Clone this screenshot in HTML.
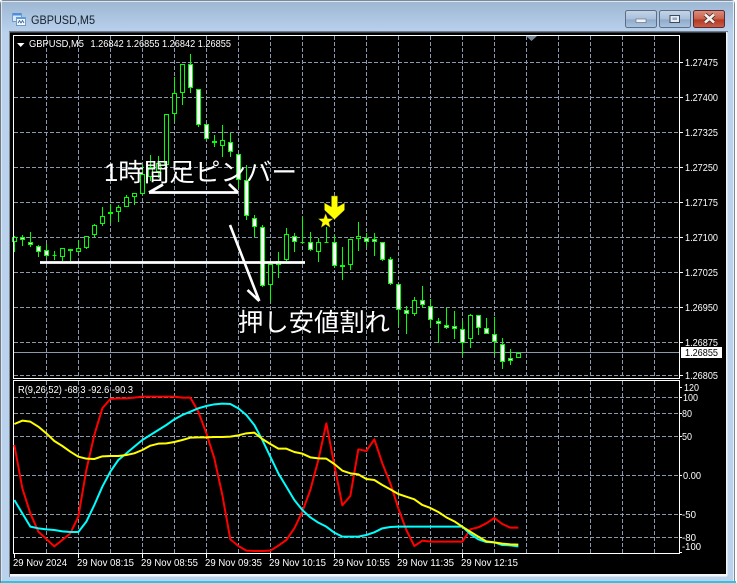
<!DOCTYPE html>
<html lang="ja">
<head>
<meta charset="utf-8">
<title>GBPUSD,M5</title>
<style>
html,body{margin:0;padding:0;background:#fff;width:737px;height:583px;overflow:hidden}
svg{display:block}
text{font-family:"Liberation Sans","Noto Sans CJK JP",sans-serif}
</style>
</head>
<body>
<svg width="737" height="583" viewBox="0 0 737 583" xmlns="http://www.w3.org/2000/svg">
<defs>
<linearGradient id="tb" x1="0" y1="0" x2="0" y2="1"><stop offset="0" stop-color="#9db6d2"/><stop offset="1" stop-color="#b9d1ec"/></linearGradient>
<linearGradient id="btn" x1="0" y1="0" x2="0" y2="1"><stop offset="0" stop-color="#c3d4e8"/><stop offset=".5" stop-color="#a9c0da"/><stop offset=".55" stop-color="#8fabc9"/><stop offset="1" stop-color="#a8c4e0"/></linearGradient>
<linearGradient id="cls" x1="0" y1="0" x2="0" y2="1"><stop offset="0" stop-color="#dc8f80"/><stop offset=".5" stop-color="#c9604a"/><stop offset=".55" stop-color="#b23a22"/><stop offset="1" stop-color="#c9604a"/></linearGradient>
</defs>

<!-- window frame -->
<path d="M4 0.5H731Q735 0.5 735 4.5V583H0V4.5Q0 0.5 4 0.5Z" fill="#bad2ec"/>
<path d="M4 .5H731Q734.5 .5 734.5 4.5V583" fill="none" stroke="#7d8b98" stroke-width="1"/>
<path d="M.5 583V4.5Q.5 .5 4 .5" fill="none" stroke="#6f7c88" stroke-width="1"/>
<rect x="1" y="1" width="733" height="31" fill="url(#tb)"/>
<rect x="1" y="1" width="733" height="1" fill="#dfe8f2"/>
<rect x="733" y="2" width="1" height="581" fill="#e6eef7"/>
<rect x="1" y="2" width="1" height="581" fill="#dbe6f2"/>
<rect x="1" y="581" width="735" height="2" fill="#2cc4de"/>
<rect x="9" y="31" width="719" height="1.5" fill="#6d7a88"/>
<rect x="9" y="32" width="1" height="545" fill="#7b8794"/>
<rect x="10" y="574" width="717" height="2.5" fill="#f2f6fb"/>
<rect x="726" y="32" width="1.5" height="544" fill="#f2f6fb"/>

<!-- title icon -->
<rect x="12.5" y="13.5" width="9" height="8" fill="#dbe9f8" stroke="#6c9bd0"/>
<rect x="13" y="13" width="8" height="2.5" fill="#4f8fd6"/>
<rect x="16.5" y="17.5" width="9" height="8" fill="#f4f8fd" stroke="#6c9bd0"/>
<rect x="17" y="17" width="8" height="2" fill="#5f9cdd"/>
<path d="M18 23l1.5-2.5 1.5 2.5 1.5-2.5 1.5 2.5" fill="none" stroke="#3a5a80" stroke-width=".8"/>
<text x="31" y="24" font-size="12" fill="#15202c" textLength="64" lengthAdjust="spacingAndGlyphs">GBPUSD,M5</text>

<!-- window buttons -->
<rect x="625.5" y="10.5" width="31" height="17" rx="2" fill="url(#btn)" stroke="#5c6d84"/>
<rect x="636" y="19" width="10" height="3.5" fill="#f2f4f7" stroke="#5a6675" stroke-width=".6"/>
<rect x="659.5" y="10.5" width="31" height="17" rx="2" fill="url(#btn)" stroke="#5c6d84"/>
<rect x="670" y="15.5" width="9.5" height="7" fill="#e8edf3" stroke="#3e4a58" stroke-width="1"/>
<rect x="672.5" y="17.5" width="4.5" height="2.5" fill="#8fa9c5"/>
<rect x="693.5" y="10.5" width="31" height="17" rx="2" fill="url(#cls)" stroke="#5b2a30"/>
<path d="M705 14.5L714 22.5M714 14.5L705 22.5" stroke="#4c2a26" stroke-width="4.2"/>
<path d="M705 14.5L714 22.5M714 14.5L705 22.5" stroke="#f4f1ef" stroke-width="2.6"/>

<!-- chart background -->
<rect x="10" y="32.5" width="716" height="541.5" fill="#000"/>

<!-- grid -->
<g stroke="#8a9aaa" stroke-width="1" stroke-dasharray="4 2" fill="none">
<path d="M46.5 36V378M78.5 36V378M110.5 36V378M142.5 36V378M174.5 36V378M206.5 36V378M238.5 36V378M270.5 36V378M302.5 36V378M334.5 36V378M366.5 36V378M398.5 36V378M430.5 36V378M462.5 36V378M494.5 36V378M526.5 36V378M558.5 36V378M590.5 36V378M622.5 36V378M654.5 36V378"/>
<path d="M14 62.5H679M14 97.5H679M14 132.5H679M14 167.5H679M14 202.5H679M14 237.5H679M14 272.5H679M14 307.5H679M14 342.5H679M14 375.5H679"/>
<path d="M46.5 381V553M78.5 381V553M110.5 381V553M142.5 381V553M174.5 381V553M206.5 381V553M238.5 381V553M270.5 381V553M302.5 381V553M334.5 381V553M366.5 381V553M398.5 381V553M430.5 381V553M462.5 381V553M494.5 381V553M526.5 381V553M558.5 381V553M590.5 381V553M622.5 381V553M654.5 381V553"/>
<path d="M14 397.5H679M14 413.5H679M14 436.5H679M14 475.5H679M14 514.5H679M14 537.5H679"/>
</g>

<!-- current price line -->
<path d="M14 352.5H680" stroke="#8a9aaa" stroke-width="1"/>

<!-- wicks -->
<path fill="none" stroke="#00ff00" stroke-width="1" d="M14.5 236V252M22.5 235V246M30.5 232V247M38.5 245V257M46.5 244V258M54.5 251V260M62.5 248V261M70.5 249V261M78.5 240V253M86.5 236V249M94.5 224V237M102.5 207V226M110.5 204V223M118.5 205V222M126.5 195V207M134.5 193V205M142.5 165V195M150.5 155V181M158.5 156V178M166.5 114V168M174.5 77V121M182.5 64V105M190.5 54V93M198.5 89V127M206.5 124V139M214.5 135V147M222.5 125V157M230.5 133V157M238.5 154V188M246.5 165V220M254.5 215V237M262.5 225V287M270.5 264V302M278.5 252V278M286.5 228V261M294.5 233V252M302.5 217V243M310.5 232V251M318.5 238V262M326.5 227V243M334.5 235V268M342.5 247V280M350.5 239V270M358.5 222V251M366.5 233V247M374.5 233V256M382.5 242V261M390.5 257V285M398.5 284V326M406.5 306V334M414.5 297V316M422.5 286V308M430.5 299V327M438.5 318V343M446.5 308V329M454.5 311V339M462.5 321V356M470.5 314V348M478.5 315V335M486.5 318V334M494.5 317V355M502.5 338V369M510.5 349V365M518.5 353V358"/>

<!-- hollow bodies -->
<path fill="#000" stroke="#00ff00" stroke-width="1" d="M12.5 237.5h4V241.5h-4zM60.5 248.5h4V256.5h-4zM76.5 248.5h4V251.5h-4zM84.5 236.5h4V247.5h-4zM92.5 225.5h4V234.5h-4zM100.5 216.5h4V223.5h-4zM108.5 212.5h4V213.5h-4zM116.5 207.5h4V211.5h-4zM124.5 197.5h4V206.5h-4zM132.5 193.5h4V196.5h-4zM140.5 174.5h4V193.5h-4zM148.5 167.5h4V176.5h-4zM156.5 163.5h4V171.5h-4zM164.5 114.5h4V164.5h-4zM172.5 93.5h4V113.5h-4zM180.5 64.5h4V92.5h-4zM220.5 140.5h4V145.5h-4zM268.5 264.5h4V284.5h-4zM276.5 261.5h4V264.5h-4zM284.5 234.5h4V259.5h-4zM316.5 242.5h4V251.5h-4zM348.5 239.5h4V264.5h-4zM356.5 236.5h4V238.5h-4zM412.5 300.5h4V313.5h-4zM468.5 315.5h4V338.5h-4zM516.5 353.5h4V357.5h-4z"/>

<!-- filled bodies -->
<path fill="#fff" stroke="#00ff00" stroke-width="1" d="M20.5 237.5h4V239.5h-4zM28.5 242.5h4V244.5h-4zM36.5 246.5h4V251.5h-4zM44.5 250.5h4V255.5h-4zM52.5 255.5h4V255.5h-4zM68.5 249.5h4V250.5h-4zM188.5 64.5h4V87.5h-4zM196.5 89.5h4V124.5h-4zM204.5 124.5h4V138.5h-4zM212.5 141.5h4V142.5h-4zM228.5 142.5h4V151.5h-4zM236.5 154.5h4V179.5h-4zM244.5 180.5h4V215.5h-4zM252.5 218.5h4V226.5h-4zM260.5 227.5h4V285.5h-4zM292.5 236.5h4V241.5h-4zM300.5 242.5h4V242.5h-4zM308.5 242.5h4V249.5h-4zM324.5 242.5h4V242.5h-4zM332.5 242.5h4V265.5h-4zM340.5 265.5h4V266.5h-4zM364.5 238.5h4V241.5h-4zM372.5 239.5h4V241.5h-4zM380.5 242.5h4V259.5h-4zM388.5 259.5h4V283.5h-4zM396.5 284.5h4V309.5h-4zM404.5 310.5h4V313.5h-4zM420.5 300.5h4V304.5h-4zM428.5 306.5h4V319.5h-4zM436.5 321.5h4V323.5h-4zM444.5 325.5h4V327.5h-4zM452.5 326.5h4V328.5h-4zM460.5 329.5h4V342.5h-4zM476.5 315.5h4V327.5h-4zM484.5 328.5h4V333.5h-4zM492.5 334.5h4V341.5h-4zM500.5 344.5h4V361.5h-4zM508.5 358.5h4V360.5h-4z"/>

<!-- panel frames -->
<path d="M13.5 378.5V35.5H679.5V378.5H13.5Z" fill="none" stroke="#fff" stroke-width="1"/>
<path d="M13.5 380.5H679.5V553.5H13.5Z" fill="none" stroke="#fff" stroke-width="1"/>
<path d="M526 36H537L531.5 41Z" fill="#778899"/>
<path d="M14.5 554V558M78.5 554V558M142.5 554V558M206.5 554V558M270.5 554V558M334.5 554V558M398.5 554V558M462.5 554V558" stroke="#fff" stroke-width="1"/>
<path d="M680 62.5h3M680 97.5h3M680 132.5h3M680 167.5h3M680 202.5h3M680 237.5h3M680 272.5h3M680 307.5h3M680 342.5h3M680 375.5h3M680 387.5h2M680 397.5h2M680 413.5h2M680 436.5h2M680 475.5h2M680 514.5h2M680 537.5h2M680 552.5h2" stroke="#fff" stroke-width="1"/>

<!-- price axis -->
<g fill="#fff" font-size="10.5">
<text x="685" y="66" textLength="33" lengthAdjust="spacingAndGlyphs">1.27475</text>
<text x="685" y="101" textLength="33" lengthAdjust="spacingAndGlyphs">1.27400</text>
<text x="685" y="136" textLength="33" lengthAdjust="spacingAndGlyphs">1.27325</text>
<text x="685" y="171" textLength="33" lengthAdjust="spacingAndGlyphs">1.27250</text>
<text x="685" y="206" textLength="33" lengthAdjust="spacingAndGlyphs">1.27175</text>
<text x="685" y="241" textLength="33" lengthAdjust="spacingAndGlyphs">1.27100</text>
<text x="685" y="276" textLength="33" lengthAdjust="spacingAndGlyphs">1.27025</text>
<text x="685" y="311" textLength="33" lengthAdjust="spacingAndGlyphs">1.26950</text>
<text x="685" y="346" textLength="33" lengthAdjust="spacingAndGlyphs">1.26875</text>
<text x="685" y="379" textLength="33" lengthAdjust="spacingAndGlyphs">1.26805</text>
</g>
<rect x="681" y="347" width="41" height="11" fill="#fff"/>
<text x="685" y="356" font-size="10.5" fill="#000" textLength="33" lengthAdjust="spacingAndGlyphs">1.26855</text>

<!-- header text -->
<path d="M17 43H24.5L20.7 47Z" fill="#fff"/>
<text x="29" y="47" font-size="10.5" fill="#fff" textLength="55" lengthAdjust="spacingAndGlyphs">GBPUSD,M5</text>
<text x="90.5" y="47" font-size="10.5" fill="#fff" textLength="140.5" lengthAdjust="spacingAndGlyphs">1.26842 1.26855 1.26842 1.26855</text>

<!-- drawn annotations -->
<g fill="none" stroke="#fff" stroke-width="2.8">
<path d="M40 262.5H305"/>
<path d="M149 192.5H238M149 192.5L163 184.5M238 192.5L229 184"/>
</g>
<path d="M230 225L259.3 301M247.5 290L259.3 301" fill="none" stroke="#fff" stroke-width="2.6"/>
<text x="104" y="181" font-size="25" font-weight="400" fill="#fff" textLength="193" lengthAdjust="spacingAndGlyphs">1時間足ピンバー</text>
<text x="238" y="331" font-size="25" font-weight="400" fill="#fff" textLength="152" lengthAdjust="spacingAndGlyphs">押し安値割れ</text>

<!-- yellow markers -->
<path d="M331.5 196H337.5V207L344.5 203V210L334.5 219.5L324.5 210V203L331.5 207Z" fill="#ffff00" stroke="#7f7f00" stroke-width=".5"/>
<path d="M325.7 213.5L327.6 218.6L333 218.8L328.8 222.2L330.2 227.4L325.7 224.4L321.2 227.4L322.6 222.2L318.4 218.8L323.8 218.6Z" fill="#ffff00" stroke="#7f7f00" stroke-width=".4"/>

<!-- indicator lines -->
<g transform="translate(0 380) scale(.33333)" fill="none" stroke-width="6" stroke-linejoin="round">
<polyline stroke="#ff0000" points="43,195 67,325 91,400 115,455 139,477 163,499 187,480 211,460 235,410 259,270 283,165 307,85 331,57 355,55 379,55 403,53 427,50 451,50 475,50 499,50 523,50 547,53 571,53 595,95 619,160 643,235 667,345 691,478 715,498 739,512 763,513 787,513 811,512 835,497 859,480 883,445 907,395 931,330 955,240 979,130 1003,255 1027,376 1051,348 1075,208 1099,213 1123,178 1147,250 1171,310 1195,385 1219,450 1243,498 1267,482 1291,485 1387,485 1411,448 1435,442 1459,430 1483,414 1507,432 1531,443 1555,443"/>
<polyline stroke="#00ffff" points="43,360 67,400 91,440 115,445 139,448 163,450 187,454 211,456 235,456 259,425 283,375 307,320 331,275 355,240 379,220 403,200 427,180 451,165 475,150 499,135 523,118 547,105 571,95 595,85 619,78 643,73 667,71 691,72 715,85 739,105 763,135 787,180 811,230 835,280 859,320 883,360 907,390 931,412 955,428 979,440 1003,458 1027,470 1051,470 1075,470 1099,465 1123,457 1147,445 1171,441 1195,440 1387,440 1411,462 1435,478 1459,486 1483,487 1507,495 1531,496 1555,499"/>
<polyline stroke="#ffff00" points="43,132 67,122 91,125 115,140 139,160 163,183 187,198 211,215 235,230 259,236 283,237 307,229 331,228 355,228 379,225 403,220 427,210 451,197 475,191 499,190 523,186 547,180 571,173 595,172 619,172 643,171 667,171 691,170 715,166 739,160 763,158 787,177 811,192 835,206 859,206 883,216 907,221 931,232 955,235 979,236 1003,252 1027,272 1051,280 1075,283 1099,297 1123,300 1147,315 1171,328 1195,342 1219,350 1243,358 1267,375 1291,384 1315,396 1339,412 1363,424 1387,440 1411,455 1435,470 1459,484 1483,487 1507,491 1531,493 1555,494"/>
</g>

<text x="18" y="393" font-size="10.5" fill="#fff" textLength="115" lengthAdjust="spacingAndGlyphs">R(9,26,52) -68.3 -92.6 -90.3</text>

<!-- indicator axis -->
<g fill="#fff" font-size="10.5">
<text x="684" y="391" textLength="15" lengthAdjust="spacingAndGlyphs">120</text>
<text x="683" y="401" textLength="15" lengthAdjust="spacingAndGlyphs">100</text>
<text x="682" y="417" textLength="10" lengthAdjust="spacingAndGlyphs">80</text>
<text x="682" y="440" textLength="10" lengthAdjust="spacingAndGlyphs">50</text>
<text x="683" y="479" textLength="18" lengthAdjust="spacingAndGlyphs">0.00</text>
<text x="682" y="518" textLength="14" lengthAdjust="spacingAndGlyphs">-50</text>
<text x="682" y="541" textLength="14" lengthAdjust="spacingAndGlyphs">-80</text>
<text x="682" y="550" textLength="19" lengthAdjust="spacingAndGlyphs">-100</text>
</g>

<!-- time axis -->
<g fill="#fff" font-size="10.5">
<text x="13" y="566" textLength="54" lengthAdjust="spacingAndGlyphs">29 Nov 2024</text>
<text x="77" y="566" textLength="57" lengthAdjust="spacingAndGlyphs">29 Nov 08:15</text>
<text x="141" y="566" textLength="57" lengthAdjust="spacingAndGlyphs">29 Nov 08:55</text>
<text x="205" y="566" textLength="57" lengthAdjust="spacingAndGlyphs">29 Nov 09:35</text>
<text x="269" y="566" textLength="57" lengthAdjust="spacingAndGlyphs">29 Nov 10:15</text>
<text x="333" y="566" textLength="57" lengthAdjust="spacingAndGlyphs">29 Nov 10:55</text>
<text x="397" y="566" textLength="57" lengthAdjust="spacingAndGlyphs">29 Nov 11:35</text>
<text x="461" y="566" textLength="57" lengthAdjust="spacingAndGlyphs">29 Nov 12:15</text>
</g>
</svg>
</body>
</html>
